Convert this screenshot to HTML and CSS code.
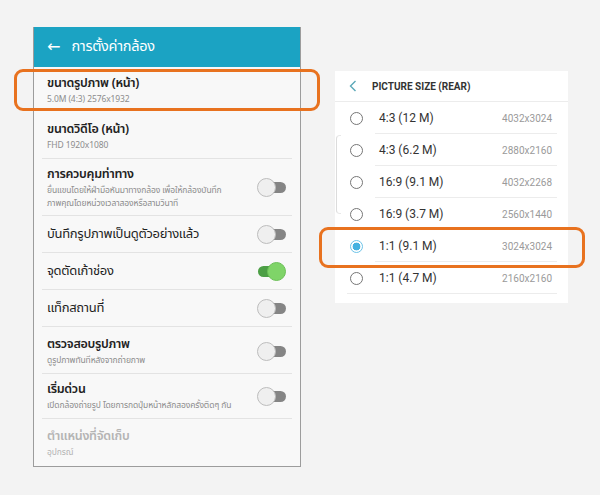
FILE: index.html
```html
<!DOCTYPE html>
<html lang="th">
<head>
    <meta charset="UTF-8">
    <meta name="viewport" content="width=device-width, initial-scale=1.0">
    <title>Camera settings</title>
    <link rel="stylesheet" href="styles.css">
</head>
<body>
    <section class="stage">
        <div class="phone">
            <div class="topbar">
                <span class="back">&#8592;</span>
                <span class="topbar-title">การตั้งค่ากล้อง</span>
            </div>
            <div class="row mark">
                <div class="txt">
                    <div class="title">ขนาดรูปภาพ (หน้า)</div>
                    <div class="sub">5.0M (4:3) 2576x1932</div>
                </div>
                <span class="ring ring-left"></span>
            </div>
            <div class="row">
                <div class="txt">
                    <div class="title">ขนาดวิดีโอ (หน้า)</div>
                    <div class="sub">FHD 1920x1080</div>
                </div>
            </div>
            <div class="row tall">
                <div class="txt">
                    <div class="title">การควบคุมท่าทาง</div>
                    <div class="sub">ยื่นแขนโดยให้ฝ่ามือหันมาทางกล้อง เพื่อให้กล้องบันทึก<br>ภาพคุณโดยหน่วงเวลาสองหรือสามวินาที</div>
                </div>
                <span class="switch"></span>
            </div>
            <div class="row single">
                <div class="title">บันทึกรูปภาพเป็นดูตัวอย่างแล้ว</div>
                <span class="switch"></span>
            </div>
            <div class="row single">
                <div class="title">จุดตัดเก้าช่อง</div>
                <span class="switch on"></span>
            </div>
            <div class="row single">
                <div class="title">แท็กสถานที่</div>
                <span class="switch"></span>
            </div>
            <div class="row roomy">
                <div class="txt">
                    <div class="title">ตรวจสอบรูปภาพ</div>
                    <div class="sub">ดูรูปภาพทันทีหลังจากถ่ายภาพ</div>
                </div>
                <span class="switch"></span>
            </div>
            <div class="row snug">
                <div class="txt">
                    <div class="title">เริ่มด่วน</div>
                    <div class="sub">เปิดกล้องถ่ายรูป โดยการกดปุ่มหน้าหลักสองครั้งติดๆ กัน</div>
                </div>
                <span class="switch"></span>
            </div>
            <div class="row last dim">
                <div class="txt">
                    <div class="title">ตำแหน่งที่จัดเก็บ</div>
                    <div class="sub">อุปกรณ์</div>
                </div>
            </div>
        </div>

        <div class="card">
            <div class="card-head">
                <svg class="chev" width="8" height="12" viewBox="0 0 8 12"><path d="M6.5 1 L1.5 6 L6.5 11" fill="none" stroke="#5ba8b8" stroke-width="1.4"/></svg>
                <span>PICTURE SIZE (REAR)</span>
            </div>
            <div class="opt"><span class="radio"></span><span class="lbl">4:3 (12 M)</span><span class="res">4032x3024</span></div>
            <div class="opt"><span class="radio"></span><span class="lbl">4:3 (6.2 M)</span><span class="res">2880x2160</span></div>
            <div class="opt"><span class="radio"></span><span class="lbl">16:9 (9.1 M)</span><span class="res">4032x2268</span></div>
            <div class="opt"><span class="radio"></span><span class="lbl">16:9 (3.7 M)</span><span class="res">2560x1440</span></div>
            <div class="opt mark"><span class="radio sel"></span><span class="lbl">1:1 (9.1 M)</span><span class="res">3024x3024</span><span class="ring ring-right"></span></div>
            <div class="opt end"><span class="radio"></span><span class="lbl">1:1 (4.7 M)</span><span class="res">2160x2160</span></div>
        </div>
    </section>
</body>
</html>
```

FILE: styles.css
```css
body{
    margin: 0;
    background: #f3f3f3;
    font-family: "Noto Sans Thai", "Noto Sans Thai UI", "Noto Sans", "DejaVu Sans", sans-serif;
}
.stage{
    display: flex;
    align-items: flex-start;
    padding: 27px 0 0 33px;
}

/* left phone screen */
.phone{
    width: 266px;
    border: 1px solid #9c9c9c;
    border-top: none;
    background: #f8f8f8;
}
.topbar{
    height: 40px;
    background: #1ba3c3;
    color: #fff;
    display: flex;
    align-items: center;
    padding-left: 13px;
}
.back{
    font-size: 16px;
    margin-right: 11px;
}
.topbar-title{
    font-size: 14.5px;
    letter-spacing: -0.3px;
}
.row{
    position: relative;
    display: flex;
    align-items: center;
    justify-content: space-between;
    margin: 0 8px;
    height: 32px;
    padding: 7px 6px 6px 5px;
    border-bottom: 1px solid #e3e3e3;
}
.row.mark{
    border-bottom-color: transparent;
}
.row.tall{
    height: 43px;
}
.row.single{
    height: 24px;
    padding-top: 6px;
}
.row.roomy{
    height: 33px;
    padding-top: 8px;
    padding-bottom: 5px;
}
.row.snug{
    height: 31px;
}
.row.last{
    border-bottom: none;
    padding-top: 8px;
    padding-bottom: 7px;
}
.title{
    font-size: 12.5px;
    line-height: 18px;
    font-weight: 600;
    letter-spacing: -0.3px;
    color: #222;
    white-space: nowrap;
}
.row.single .title{
    font-weight: 400;
    font-size: 13px;
    color: #1e1e1e;
}
.sub{
    font-size: 8.5px;
    line-height: 13px;
    letter-spacing: -0.1px;
    color: #8c8c8c;
    white-space: nowrap;
}
.dim .title,.dim .sub{
    color: #b4b4b4;
}

.switch{
    position: relative;
    flex: none;
    width: 29px;
    height: 19px;
}
.switch::before{
    content: "";
    position: absolute;
    left: 9px;
    right: 0;
    top: 4px;
    height: 11px;
    border-radius: 0 6px 6px 0;
    background: #858585;
}
.switch::after{
    content: "";
    position: absolute;
    left: 0;
    top: 0;
    width: 17px;
    height: 17px;
    border-radius: 50%;
    background: #efefef;
    border: 1px solid #bdbdbd;
}
.switch.on::before{
    left: 1px;
    right: 9px;
    border-radius: 6px 0 0 6px;
    background: #4c9f45;
}
.switch.on::after{
    left: auto;
    right: 0;
    background: #7fd468;
    border-color: #6cc058;
}

/* orange markers */
.ring{
    position: absolute;
    border: 3px solid #e8721f;
    border-radius: 9px;
    pointer-events: none;
}
.ring-left{
    left: -28px;
    top: 2px;
    width: 300px;
    height: 36px;
}
.ring-right{
    left: -16px;
    top: -3px;
    width: 260px;
    height: 35px;
}

/* right picture size card */
.card{
    position: relative;
    width: 233px;
    margin: 44px 0 0 34px;
    background: #fff;
    padding-bottom: 9px;
}
.card::before{
    content: "";
    position: absolute;
    left: 1px;
    top: 64px;
    width: 4px;
    height: 77px;
    border-left: 1px solid #dcdcdc;
    border-top: 1px solid #e8e8e8;
    border-bottom: 1px solid #e8e8e8;
    border-radius: 4px 0 0 4px;
}
.card-head{
    height: 30px;
    display: flex;
    align-items: center;
    padding-left: 14px;
    border-bottom: 1px solid #ececec;
    font-family: Roboto, "Liberation Sans", sans-serif;
    font-size: 10px;
    font-weight: 700;
    color: #333;
}
.chev{
    margin-right: 15px;
}
.opt{
    position: relative;
    height: 32px;
    display: flex;
    align-items: center;
    font-family: Roboto, "Liberation Sans", sans-serif;
}
.opt::after{
    content: "";
    position: absolute;
    left: 40px;
    right: 11px;
    bottom: 0;
    border-bottom: 1px solid #ececec;
}
.opt.end::after{
    left: 12px;
}
.radio{
    width: 11px;
    height: 11px;
    border: 1.3px solid #767676;
    border-radius: 50%;
    margin: 0 16px 0 15px;
    flex: none;
}
.radio.sel{
    border-color: #6cc3e8;
    background: radial-gradient(circle, #45b1e0 0 3.6px, #fff 4.2px);
}
.lbl{
    flex: 1;
    font-size: 12px;
    color: #333;
}
.res{
    font-size: 10px;
    color: #9a9a9a;
    margin-right: 16px;
}
```
